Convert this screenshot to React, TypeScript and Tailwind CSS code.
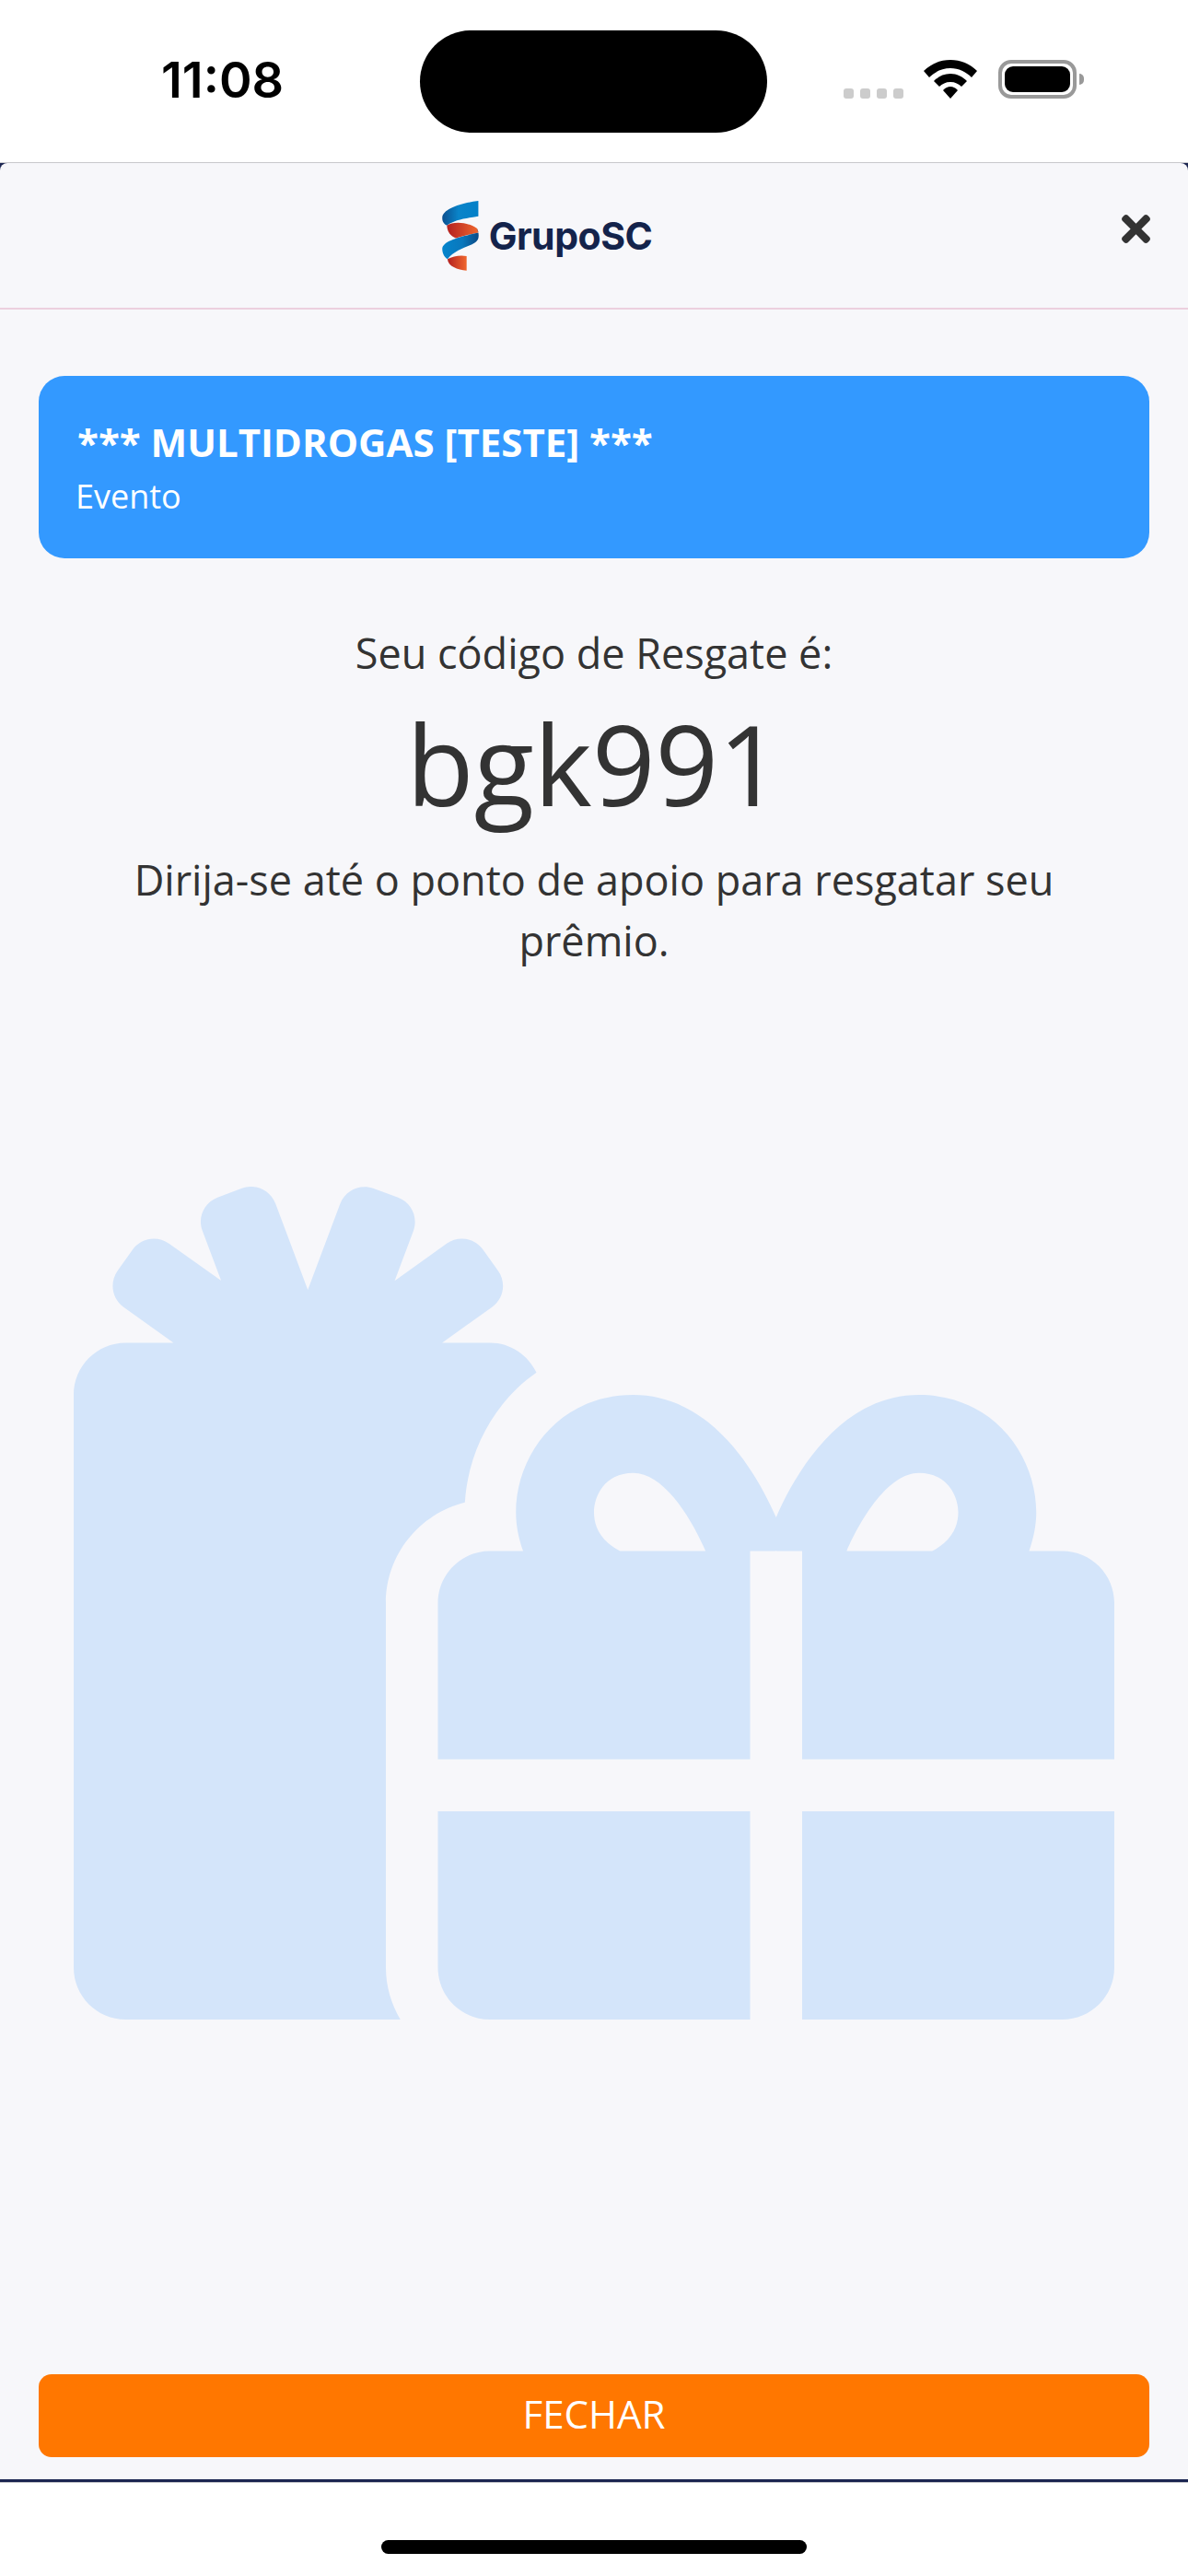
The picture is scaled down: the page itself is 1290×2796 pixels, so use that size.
import { FaGifts, FaTimes } from 'react-icons/fa';

function Logo() {
  return (
    <div className="flex items-center">
      <svg width="40" height="76" viewBox="126 57 118 227" className="block">
        <defs>
          <linearGradient id="blueTop" x1="0" y1="0" x2="1" y2="0">
            <stop offset="0" stopColor="#0b4f8f" />
            <stop offset="0.45" stopColor="#0a84c9" />
            <stop offset="1" stopColor="#0380c8" />
          </linearGradient>
          <linearGradient id="blueMid" x1="0" y1="0" x2="1" y2="0">
            <stop offset="0" stopColor="#0484cc" />
            <stop offset="0.55" stopColor="#0a78bd" />
            <stop offset="1" stopColor="#0b4a85" />
          </linearGradient>
          <linearGradient id="redBand" x1="0" y1="0" x2="1" y2="0">
            <stop offset="0" stopColor="#b3201f" />
            <stop offset="1" stopColor="#f0672e" />
          </linearGradient>
        </defs>
        <path d="M243 57V107C205 113 165 118 141 137C129 130 126 122 126 112C127 82 190 64 243 57Z" fill="url(#blueTop)" />
        <path d="M141 137C160 124 205 124 238 146C241 150 243 155 243 160C215 165 190 172 170 178C150 170 142 155 141 137Z" fill="url(#redBand)" />
        <path d="M238 146C244 155 245 170 243 178C236 205 175 205 143 246C131 238 126 225 126 212C128 185 190 172 243 160Z" fill="url(#blueMid)" />
        <path d="M143 246C160 236 185 232 205 236V283C175 280 145 270 143 246Z" fill="url(#redBand)" />
      </svg>
      <span className="mt-[2px] ml-[11px] font-['Inter',sans-serif] text-[41px] leading-none font-bold tracking-[-0.5px] text-[#14234b]">
        GrupoSC
      </span>
    </div>
  );
}

function StatusBar() {
  return (
    <div className="relative flex h-[176px] items-start bg-white">
      <span className="mt-[60px] ml-[175px] font-['Inter',sans-serif] text-[54px] leading-[54px] font-semibold text-black">
        11:08
      </span>
      <div className="absolute top-[33px] left-[456px] h-[111px] w-[377px] rounded-full bg-black" />
      <div className="absolute top-[65px] left-[916px] flex h-[42px] items-end">
        <div className="flex gap-[7px]">
          <div className="h-[11px] w-[11px] rounded-[3px] bg-[#cccccc]" />
          <div className="h-[11px] w-[11px] rounded-[3px] bg-[#cccccc]" />
          <div className="h-[11px] w-[11px] rounded-[3px] bg-[#cccccc]" />
          <div className="h-[11px] w-[11px] rounded-[3px] bg-[#cccccc]" />
        </div>
        <svg width="58" height="42" viewBox="0 0 58 42" className="ml-[22px] block">
          <path d="M29 0C40 0 50 4 58 12L52 19C46 13 38 9 29 9C20 9 12 13 6 19L0 12C8 4 18 0 29 0Z" fill="#000" />
          <path d="M29 15C36 15 42 18 47 23L41 29C38 26 34 24 29 24C24 24 20 26 17 29L11 23C16 18 22 15 29 15Z" fill="#000" />
          <path d="M29 29C32 29 34 30 37 33L29 42L21 33C24 30 26 29 29 29Z" fill="#000" />
        </svg>
        <div className="ml-[23px] flex h-[42px] w-[85px] items-center justify-center rounded-[14px] border-[4px] border-[#999999]">
          <div className="h-[28px] w-[71px] rounded-[9px] bg-black" />
        </div>
        <div className="mb-[15px] ml-[3px] h-[12px] w-[5px] rounded-r-full bg-[#999999]" />
      </div>
    </div>
  );
}

export default function App() {
  return (
    <div className="flex h-[2796px] w-[1290px] flex-col bg-white font-['Open_Sans',sans-serif]">
      <StatusBar />
      <div className="h-[1px] bg-[#c8c8cc]" />
      <div className="bg-[#1b2551]">
        <div className="flex h-[2514px] flex-col rounded-t-[8px] bg-[#f7f7fa]">
          {/* Header */}
          <header className="relative flex h-[159px] items-center justify-center border-b-2 border-[#ecd0de]">
            <div className="mr-[102px]">
              <Logo />
            </div>
            <FaTimes className="absolute top-[49px] right-[34px] h-[45px] w-[45px] text-[#333333]" />
          </header>

          {/* Main */}
          <main className="flex flex-1 flex-col px-[42px] pt-[72px]">
            <div className="flex h-[198px] flex-col justify-center rounded-[28px] bg-[#3399ff] px-[40px] text-white">
              <h1 className="ml-[2px] text-[42px] leading-[58px] font-bold">*** MULTIDROGAS [TESTE] ***</h1>
              <p className="mt-[5px] text-[36px] leading-[50px]">Evento</p>
            </div>

            <div className="mt-[72px] text-center text-[#333333]">
              <p className="text-[45px] leading-[62px]">Seu código de Resgate é:</p>
              <p className="mt-[18px] text-[120px] leading-[142px]">bgk991</p>
              <p className="mt-[22px] px-[70px] text-[45px] leading-[66px]">
                Dirija-se até o ponto de apoio para resgatar seu prêmio.
              </p>
            </div>

            <div className="mt-[234px] ml-[38px]">
              <FaGifts className="h-[904px] w-[1130px] text-[#d4e5fa]" />
            </div>

            <button className="mt-auto mb-[24px] h-[90px] w-full rounded-[14px] bg-[#ff7700] pb-[6px] text-[42px] text-white">
              FECHAR
            </button>
          </main>
        </div>
      </div>
      <div className="h-[3px] bg-[#1b2551]" />
      <div className="h-[1px] bg-[#c8c8cc]" />
      <div className="flex flex-1 justify-center bg-white pt-[62px]">
        <div className="h-[15px] w-[462px] rounded-full bg-black" />
      </div>
    </div>
  );
}
